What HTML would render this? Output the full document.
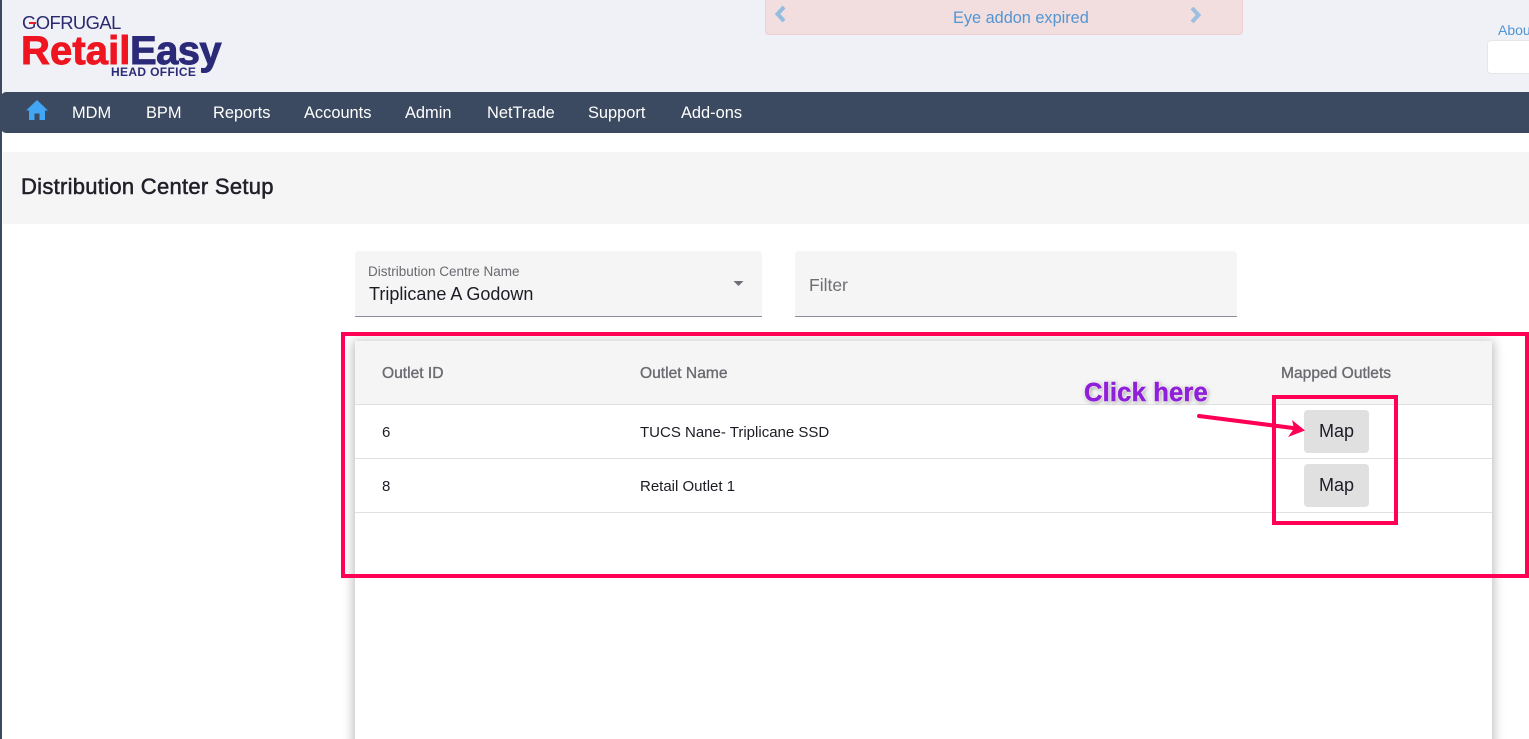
<!DOCTYPE html>
<html><head><meta charset="utf-8"><style>
html,body{margin:0;padding:0;width:1529px;height:739px;overflow:hidden;background:#fff;font-family:"Liberation Sans",sans-serif}
.a{position:absolute;white-space:nowrap}
#wrap{position:absolute;left:0;top:0;width:1529px;height:739px;overflow:hidden;background:#fff}
.nav{top:103.5px;font-size:16.4px;color:#fff;line-height:18px}
.th{top:365px;font-size:15.6px;font-weight:500;color:#6a6a70;line-height:17px;-webkit-text-stroke:.35px #6a6a70}
.td{font-size:15px;color:#1c1c24;line-height:17px}
.btn{left:1304px;width:65px;height:43px;background:#e0e0e0;border-radius:4px;text-align:center;line-height:43px;font-size:18px;color:#1c1c28}
.ln{left:355px;width:1137px;height:1px;background:#e0e0e0}
</style></head><body><div id="wrap">
<div class="a" style="left:0;top:0;width:1529px;height:92px;background:#f0f1f7"></div>
<div class="a" style="left:0;top:0;width:2px;height:739px;background:#3b4a60"></div>
<div class="a" style="left:2px;top:0;width:5px;height:5px;background:#f0f1f7;border-radius:5px 0 0 0"></div>

<div class="a" style="left:22px;top:13px;font-size:18.4px;color:#2b2a70;letter-spacing:-.55px;line-height:20px">GOFRUGAL</div>
<div class="a" style="left:29px;top:22px;width:7px;height:2px;background:#ee1c25"></div>
<div class="a" style="left:21px;top:28px;font-size:40px;font-weight:700;color:#ee1520;letter-spacing:.1px;line-height:46px;-webkit-text-stroke:.9px #ee1520">Retail</div>
<div class="a" style="left:130px;top:28px;font-size:40px;font-weight:700;color:#2b2a78;letter-spacing:-.6px;line-height:46px;-webkit-text-stroke:.9px #2b2a78">Easy</div>
<div class="a" style="left:111px;top:65px;font-size:12px;font-weight:700;color:#2b2a78;letter-spacing:.35px;line-height:14px">HEAD OFFICE</div>

<div class="a" style="left:765px;top:-4px;width:476px;height:37px;background:#f2dede;border:1px solid #ebcfd0;border-radius:4px"></div>
<div class="a" style="left:953px;top:8.5px;font-size:16.3px;color:#5295d3;line-height:19px">Eye addon expired</div>
<svg class="a" style="left:773px;top:5px" width="16" height="20"><path d="M11 2 L4.5 9 L11 16" fill="none" stroke="#93bde0" stroke-width="4"/></svg>
<svg class="a" style="left:1187px;top:6px" width="16" height="20"><path d="M5 2 L11.5 9 L5 16" fill="none" stroke="#9cc0e0" stroke-width="4"/></svg>
<div class="a" style="left:1498px;top:22px;font-size:14px;color:#5295d3;line-height:16px">About</div>
<div class="a" style="left:1487px;top:40px;width:60px;height:32px;background:#fff;border:1px solid #e6e6ea;border-radius:4px"></div>

<div class="a" style="left:1px;top:92px;width:1528px;height:41px;background:#3b4a60;border-radius:5px 0 0 5px"></div>
<svg class="a" style="left:25px;top:99px" width="24" height="22" viewBox="0 0 24 22"><path d="M12 1 L1 11.5 L4 11.5 L4 21 L9.5 21 L9.5 14.5 L14.5 14.5 L14.5 21 L20 21 L20 11.5 L23 11.5 Z" fill="#42a5f5"/></svg>
<div class="a nav" style="left:72px">MDM</div>
<div class="a nav" style="left:146px">BPM</div>
<div class="a nav" style="left:213px">Reports</div>
<div class="a nav" style="left:304px">Accounts</div>
<div class="a nav" style="left:405px">Admin</div>
<div class="a nav" style="left:487px">NetTrade</div>
<div class="a nav" style="left:588px">Support</div>
<div class="a nav" style="left:681px">Add-ons</div>

<div class="a" style="left:3px;top:152px;width:1526px;height:72px;background:#f5f5f5"></div>
<div class="a" style="left:21px;top:174px;font-size:22px;font-weight:500;color:#202028;line-height:26px;letter-spacing:.28px;-webkit-text-stroke:.5px #202028">Distribution Center Setup</div>

<div class="a" style="left:355px;top:251px;width:407px;height:65px;background:#f5f5f5;border-bottom:1px solid #8e8c98;border-radius:4px 4px 0 0"></div>
<div class="a" style="left:368px;top:264px;font-size:13.5px;color:#6a6a70;line-height:15px">Distribution Centre Name</div>
<div class="a" style="left:369px;top:284px;font-size:18px;color:#1c1c24;line-height:20px">Triplicane A Godown</div>
<svg class="a" style="left:733px;top:280px" width="12" height="7"><path d="M0.5 1 L10.5 1 L5.5 6 Z" fill="#6e6e76"/></svg>
<div class="a" style="left:795px;top:251px;width:442px;height:65px;background:#f5f5f5;border-bottom:1px solid #8e8c98;border-radius:4px 4px 0 0"></div>
<div class="a" style="left:809px;top:275px;font-size:17.5px;color:#6e6e74;line-height:20px">Filter</div>

<div class="a" style="left:355px;top:341px;width:1137px;height:420px;background:#fff;box-shadow:0 2px 10px 2px rgba(0,0,0,.26)"></div>
<div class="a" style="left:355px;top:341px;width:1137px;height:63px;background:#f5f5f5"></div>
<div class="a ln" style="top:404px"></div>
<div class="a ln" style="top:458px"></div>
<div class="a ln" style="top:512px"></div>
<div class="a th" style="left:382px">Outlet ID</div>
<div class="a th" style="left:640px">Outlet Name</div>
<div class="a th" style="left:1281px">Mapped Outlets</div>
<div class="a td" style="left:382px;top:424px">6</div>
<div class="a td" style="left:640px;top:424px">TUCS Nane- Triplicane SSD</div>
<div class="a td" style="left:382px;top:478px">8</div>
<div class="a td" style="left:640px;top:478px">Retail Outlet 1</div>
<div class="a btn" style="top:410px">Map</div>
<div class="a btn" style="top:464px">Map</div>

<div class="a" style="left:341px;top:332px;width:1200px;height:246px;box-sizing:border-box;border:4px solid #ff0055"></div>
<div class="a" style="left:1525px;top:332px;width:4px;height:246px;background:#ff0055"></div>
<div class="a" style="left:1272px;top:395px;width:126px;height:130px;box-sizing:border-box;border:4px solid #ff0055"></div>

<div class="a" style="left:1084px;top:378px;font-size:25.5px;font-weight:700;color:#8f1fd8;line-height:30px;letter-spacing:.2px;-webkit-text-stroke:.5px #8f1fd8;text-shadow:0 0 2px #fff,0 0 2px #fff,0 0 3px #fff,1px 1px 4px rgba(0,0,0,.6)">Click here</div>
<svg class="a" style="left:1190px;top:405px" width="120" height="40"><path d="M9 11 L103 23" stroke="#ff0055" stroke-width="4" stroke-linecap="round" fill="none"/><path d="M115 25.5 L102 15 L104 23.5 L98 32 Z" fill="#ff0055"/></svg>
</div></body></html>
